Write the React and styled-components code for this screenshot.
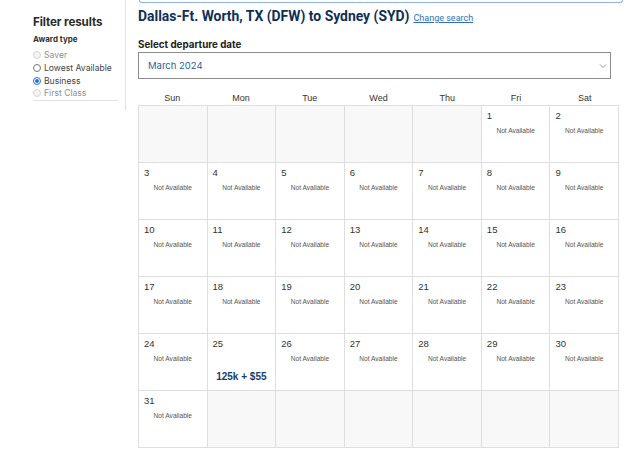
import React from "react";
import styled, { createGlobalStyle } from "styled-components";

const Global = createGlobalStyle`
  html, body { margin: 0; padding: 0; background: #fff; }
  body { font-family: "Liberation Sans", Arial, sans-serif; color: #222; }
  * { box-sizing: border-box; }
`;

const Page = styled.div`
  display: flex;
  align-items: flex-start;
  width: 640px;
  height: 460px;
  overflow: hidden;
`;

const Sidebar = styled.aside`
  width: 126px;
  flex: none;
  height: 111px;
  border-right: 1px solid #e2e2e2;
  padding: 14px 7px 0 33px;
`;

const SideTitle = styled.h2`
  margin: 0;
  font-family: Inter, "Liberation Sans", sans-serif;
  font-size: 11.6px;
  font-weight: 700;
  color: #2a2a2a;
  line-height: 16px;
  letter-spacing: -0.1px;
`;

const GroupLabel = styled.div`
  margin-top: 3px;
  font-family: Inter, "Liberation Sans", sans-serif;
  font-size: 8px;
  font-weight: 700;
  color: #333;
  line-height: 12px;
`;

const RadioList = styled.div`
  margin-top: 4px;
  display: flex;
  flex-direction: column;
  border-bottom: 1px solid #e3e3e3;
`;

const RadioRow = styled.label`
  display: flex;
  align-items: center;
  gap: 3px;
  height: 12.7px;
  font-family: Inter, "Liberation Sans", sans-serif;
  font-size: 8.6px;
  color: ${(p) => (p.$disabled ? "#8f8f8f" : "#444")};
`;

const RadioDot = styled.span`
  width: 8px;
  height: 8px;
  border-radius: 50%;
  flex: none;
  border: 1px solid ${(p) => (p.$checked ? "#2b6fd6" : p.$disabled ? "#d6d6d6" : "#767676")};
  background: ${(p) => (p.$disabled ? "#f4f4f4" : "#fff")};
  display: flex;
  align-items: center;
  justify-content: center;
  &::after {
    content: "";
    width: 4px;
    height: 4px;
    border-radius: 50%;
    background: ${(p) => (p.$checked ? "#2b6fd6" : "transparent")};
  }
`;

const Main = styled.main`
  flex: 1;
  padding-left: 12px;
`;

const CardEdge = styled.div`
  width: 484px;
  height: 3px;
  margin-left: 1px;
  border: 1px solid #8fb3e3;
  border-top: none;
  border-radius: 0 0 5px 5px;
`;

const TitleRow = styled.div`
  display: flex;
  align-items: baseline;
  gap: 4px;
  margin-top: 3px;
`;

const Title = styled.h1`
  margin: 0;
  font-family: Roboto, "Liberation Sans", sans-serif;
  font-size: 13.9px;
  font-weight: 700;
  color: #0e2f57;
  line-height: 20px;
`;

const ChangeLink = styled.a`
  font-family: Roboto, "Liberation Sans", sans-serif;
  font-size: 9px;
  color: #2f6fba;
  text-decoration: underline;
`;

const FieldLabel = styled.div`
  margin-top: 12px;
  font-family: Inter, "Liberation Sans", sans-serif;
  font-size: 9.8px;
  font-weight: 700;
  color: #222;
  line-height: 14px;
`;

const Select = styled.div`
  width: 473px;
  height: 27px;
  border: 1px solid #8d8d8d;
  display: flex;
  align-items: center;
  justify-content: space-between;
  padding: 0 3px 0 9px;
  font-family: Inter, "Liberation Sans", sans-serif;
  font-size: 9.5px;
  color: #2d5f9c;
`;

const Weekdays = styled.div`
  margin-top: 11px;
  width: 481px;
  display: grid;
  grid-template-columns: repeat(7, 1fr);
  height: 15px;
  align-items: center;
`;

const Weekday = styled.div`
  text-align: center;
  font-size: 9px;
  color: #333;
`;

const Grid = styled.div`
  width: 481px;
  display: grid;
  grid-template-columns: repeat(7, 1fr);
  grid-auto-rows: 56px;
  gap: 1px;
  padding: 1px;
  background: #dedede;
`;

const Cell = styled.div`
  background: ${(p) => (p.$empty ? "#f8f8f8" : "#fff")};
  padding: 4px 5px 0 5px;
  display: flex;
  flex-direction: column;
`;

const DayNum = styled.div`
  font-size: 9.5px;
  color: #333;
  line-height: 11px;
`;

const Status = styled.div`
  margin-top: 5px;
  text-align: center;
  font-size: 6.6px;
  color: #555;
  line-height: 9px;
`;

const Price = styled.div`
  margin-top: 22px;
  text-align: center;
  font-size: 10px;
  font-weight: 700;
  color: #153f6e;
  line-height: 12px;
`;

const Chevron = () => (
  <svg width="8" height="6" viewBox="0 0 8 6" fill="none">
    <path d="M1 1.5 L4 4.5 L7 1.5" stroke="#6f8fb8" strokeWidth="0.9" />
  </svg>
);

const awardTypes = [
  { label: "Saver", disabled: true },
  { label: "Lowest Available" },
  { label: "Business", checked: true },
  { label: "First Class", disabled: true },
];

const days = ["Sun", "Mon", "Tue", "Wed", "Thu", "Fri", "Sat"];

// March 2024 starts on a Friday: five leading blanks, 31 days, trailing blanks to fill six weeks.
const cells = [];
for (let i = 0; i < 5; i++) cells.push(null);
for (let d = 1; d <= 31; d++) cells.push(d);
while (cells.length < 42) cells.push(null);

const prices = { 25: "125k + $55" };

export default function App() {
  return (
    <>
      <Global />
      <Page>
        <Sidebar>
          <SideTitle>Filter results</SideTitle>
          <GroupLabel>Award type</GroupLabel>
          <RadioList>
            {awardTypes.map((t) => (
              <RadioRow key={t.label} $disabled={t.disabled}>
                <RadioDot $checked={t.checked} $disabled={t.disabled} />
                {t.label}
              </RadioRow>
            ))}
          </RadioList>
        </Sidebar>
        <Main>
          <CardEdge />
          <TitleRow>
            <Title>Dallas-Ft. Worth, TX (DFW) to Sydney (SYD)</Title>
            <ChangeLink href="#">Change search</ChangeLink>
          </TitleRow>
          <FieldLabel>Select departure date</FieldLabel>
          <Select>
            <span>March 2024</span>
            <Chevron />
          </Select>
          <Weekdays>
            {days.map((d) => (
              <Weekday key={d}>{d}</Weekday>
            ))}
          </Weekdays>
          <Grid>
            {cells.map((d, i) =>
              d === null ? (
                <Cell key={i} $empty />
              ) : (
                <Cell key={i}>
                  <DayNum>{d}</DayNum>
                  {prices[d] ? <Price>{prices[d]}</Price> : <Status>Not Available</Status>}
                </Cell>
              )
            )}
          </Grid>
        </Main>
      </Page>
    </>
  );
}
